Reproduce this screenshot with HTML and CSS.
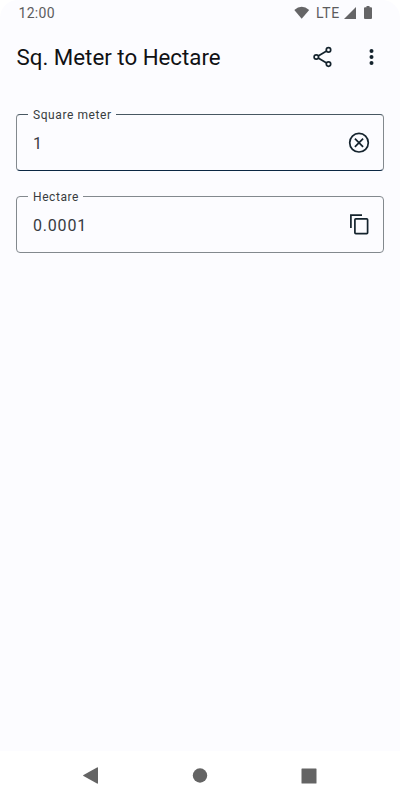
FILE: index.html
```html
<!DOCTYPE html>
<html lang="en">
<head>
<meta charset="utf-8">
<title>Sq. Meter to Hectare</title>
<link rel="stylesheet" href="styles.css">
</head>
<body>
<div class="phone">
  <div class="screen">
    <div class="status">
      <span class="clock">12:00</span>
      <svg class="wifi" width="16" height="14" viewBox="0 0 16 14"><path d="M0.300 4.100Q7.700-2.700 15.200 4.100L7.700 12.700Z"/></svg>
      <span class="network">LTE</span>
      <svg class="signal" width="12" height="12" viewBox="0 0 12 12"><path d="M12 0V12H0Z"/></svg>
      <svg class="battery" width="8" height="13" viewBox="0 0 8 13"><path d="M2.500 0h3v1.200H7q1 0 1 1V12q0 1-1 1H1q-1 0-1-1V2.200q0-1 1-1h1.500Z"/></svg>
    </div>
    <header class="appbar">
      <h1 class="title">Sq. Meter to Hectare</h1>
      <svg class="share" width="20" height="22" viewBox="0 0 20 22"><path d="M5.200 9.900L13.600 5M5.200 12.100L13.600 17"/><circle cx="3.300" cy="11" r="2.200"/><circle cx="15.500" cy="3.900" r="2.200"/><circle cx="15.500" cy="18.100" r="2.200"/></svg>
      <svg class="more" width="6" height="18" viewBox="0 0 6 18"><circle cx="2.500" cy="3" r="2"/><circle cx="2.500" cy="9" r="2"/><circle cx="2.500" cy="15" r="2"/></svg>
    </header>
    <main class="fields">
      <div class="field active">
        <span class="label">Square meter</span>
        <span class="value">1</span>
        <svg class="icon" width="24" height="24" viewBox="0 0 24 24"><circle cx="12" cy="11.700" r="9.300"/><path d="M7.900 7.600L16.100 15.800M16.100 7.600L7.900 15.800"/></svg>
      </div>
      <div class="field">
        <span class="label">Hectare</span>
        <span class="value">0.0001</span>
        <svg class="icon" width="24" height="24" viewBox="0 0 24 24"><path d="M3.900 15V2.100H15"/><rect x="7.900" y="5.900" width="12.700" height="14.700" rx="0.900"/></svg>
      </div>
    </main>
  </div>
  <nav class="navbar">
    <svg width="15" height="17" viewBox="0 0 15 17"><path d="M14 0.500Q15 0 15 1V16Q15 17 14 16.500L0.500 9Q-0.300 8.500 0.500 8Z"/></svg>
    <svg width="16" height="15" viewBox="0 0 16 15"><circle cx="8" cy="7.500" r="7.200"/></svg>
    <svg width="16" height="16" viewBox="0 0 16 16"><rect x="0.500" y="0.500" width="15" height="15" rx="0.500"/></svg>
  </nav>
</div>
</body>
</html>
```
FILE: styles.css
```css
* { box-sizing: border-box; }
body {
  margin: 0;
  background: #fff;
  font-family: Roboto, "Liberation Sans", sans-serif;
}
.phone {
  display: flex;
  flex-direction: column;
  width: 400px;
  height: 800px;
  overflow: hidden;
}
.screen {
  flex: 1;
  background: #fcfcff;
  border-radius: 18px 18px 0 0;
}
.status {
  display: flex;
  align-items: center;
  height: 25px;
  padding: 0 28px 0 18.500px;
  color: #5c5c5e;
  font-size: 14px;
}
.status svg { fill: #656567; }
.clock { margin-right: auto; letter-spacing: 0.3px; }
.network { margin: 0 4px 0 6px; letter-spacing: 0.700px; }
.battery { margin-left: 8px; }
.appbar {
  display: flex;
  align-items: center;
  height: 65px;
  padding: 0 25px 1px 16.500px;
}
.title {
  margin: 0 auto 0 0;
  color: #101114;
  font-size: 22.300px;
  font-weight: 400;
  line-height: 28px;
}
.share { fill: none; stroke: #14232d; stroke-width: 1.700; }
.more { margin-left: 36px; fill: #14232d; }
.fields {
  display: flex;
  flex-direction: column;
  gap: 25px;
  padding: 24px 16px 0;
}
.field {
  position: relative;
  display: flex;
  align-items: center;
  justify-content: space-between;
  height: 57px;
  padding: 0 12px 0 16px;
  border: 1px solid #83898e;
  border-radius: 4px;
}
.active {
  border-top-color: #485762;
  border-bottom-color: #0b2743;
}
.label {
  position: absolute;
  top: -7px;
  left: 11px;
  padding: 0 4px 0 5px;
  background: #fcfcff;
  color: #383c40;
  font-size: 12px;
  line-height: 15px;
  letter-spacing: 0.580px;
}
.value {
  padding-top: 2px;
  color: #383b3f;
  font-size: 16px;
  line-height: 24px;
  letter-spacing: 0.800px;
}
.icon { fill: none; stroke: #14232d; stroke-width: 1.700; }
.navbar {
  display: flex;
  align-items: center;
  justify-content: space-between;
  height: 49px;
  padding: 0 83px;
  background: #fff;
}
.navbar svg { fill: #646464; }
```
